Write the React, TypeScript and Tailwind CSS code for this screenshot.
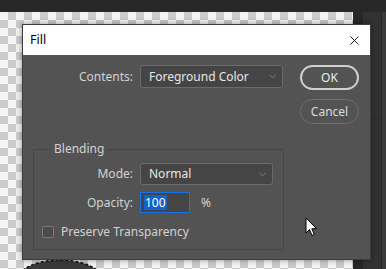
import { ChevronDown, X } from 'lucide-react';

const font = { fontFamily: '"Noto Sans", "Open Sans", sans-serif' };

function Select({ value, width }: { value: string; width: string }) {
  return (
    <div
      className={`${width} h-full flex items-center justify-between pl-[8px] pr-[4px] bg-[#454545] border border-[#6a6a6a] rounded-[3px] text-[12px] text-[#e6e6e6]`}
    >
      <span>{value}</span>
      <ChevronDown size={11} strokeWidth={1.5} className="text-[#9a9a9a]" />
    </div>
  );
}

export default function App() {
  return (
    <div className="relative w-[386px] h-[269px] overflow-hidden bg-[#282828]" style={font}>
      {/* workspace */}
      <div className="flex flex-col h-full">
        <div className="h-[12px] shrink-0" />
        <div className="flex flex-1">
          <div className="relative w-[353px] bg-[conic-gradient(#cbcbcb_25%,#f4f4f4_0_50%,#cbcbcb_0_75%,#f4f4f4_0)] bg-[length:16px_16px] overflow-hidden">
            {/* layer thumbnail peeking under dialog */}
            <svg className="absolute left-[14px] top-[244px]" width="92" height="30" viewBox="0 0 92 30">
              <ellipse cx="46" cy="26" rx="44" ry="22" fill="#3a3a3a" />
              <ellipse cx="46" cy="26" rx="44" ry="22" fill="none" stroke="#111" strokeWidth="1.5" strokeDasharray="3 2" />
            </svg>
          </div>
          <div className="w-[10px]" />
          <div className="flex-1 flex bg-[#323232]">
            <div className="w-[18px] flex flex-col">
              <div className="h-[106px]" />
              <div className="h-px bg-[#2a2a2a]" />
              <div className="flex-1" />
            </div>
            <div className="w-px bg-[#262626]" />
            <div className="flex-1 bg-[#3a3a3a]" />
          </div>
        </div>
      </div>

      {/* Fill dialog */}
      <div className="absolute left-[22px] top-[24px] w-[349px] h-[236px] flex flex-col bg-[#535353] border border-[#3c3c3c] shadow-[0_0_6px_rgba(0,0,0,0.4)]">
        <div className="h-[30px] shrink-0 bg-white flex items-center justify-between pl-[7px] pr-[8px]">
          <span className="text-[12.5px] text-black" style={{ fontFamily: '"Noto Sans", sans-serif' }}>
            Fill
          </span>
          <X size={15} strokeWidth={1.4} className="text-black" />
        </div>

        <div className="flex pl-[10px] pt-[10px]">
          <div className="w-[251px] flex flex-col">
            <div className="flex items-center h-[23px] gap-[7px]">
              <span className="w-[100px] text-right text-[12px] text-[#d2d2d2]">Contents:</span>
              <Select value="Foreground Color" width="w-[143px]" />
            </div>

            <div className="relative mt-[61px] h-[101px] border border-[#464646] flex flex-col">
              <span className="absolute -top-[10px] left-[17px] px-[3px] bg-[#535353] text-[12px] text-[#d2d2d2]">
                Blending
              </span>
              <div className="flex items-center h-[22px] gap-[7px] mt-[13px]">
                <span className="w-[99px] text-right text-[12px] text-[#d2d2d2]">Mode:</span>
                <Select value="Normal" width="w-[133px]" />
              </div>
              <div className="flex items-center h-[21px] gap-[7px] mt-[7px]">
                <span className="w-[99px] text-right text-[12px] text-[#d2d2d2]">Opacity:</span>
                <div className="w-[50px] h-full flex items-center pl-[3px] bg-[#454545] border border-[#1473e6]">
                  <span className="bg-[#1463c8] text-white text-[12px] leading-[15px] px-px">100</span>
                </div>
                <span className="ml-[4px] text-[12px] text-[#d2d2d2]">%</span>
              </div>
              <div className="flex items-center gap-[7px] mt-[10px] ml-[8px]">
                <div className="w-[12px] h-[12px] rounded-[2px] border border-[#7a7a7a] bg-[#4a4a4a]" />
                <span className="text-[12px] text-[#d2d2d2]">Preserve Transparency</span>
              </div>
            </div>
          </div>

          <div className="ml-[16px] flex flex-col gap-[9px]">
            <button className="w-[59px] h-[25px] rounded-full border-2 border-[#cfcfcf] text-[12px] text-[#ececec]">
              OK
            </button>
            <button className="w-[59px] h-[25px] rounded-full border border-[#6e6e6e] text-[12px] text-[#dcdcdc]">
              Cancel
            </button>
          </div>
        </div>

        {/* mouse cursor */}
        <svg className="absolute left-[282px] top-[192px]" width="14" height="21" viewBox="0 0 14 21">
          <path d="M1 1 L1 16 L4.5 12.5 L7 18.5 L9.3 17.5 L6.8 11.7 L11.5 11.7 Z" fill="#fff" stroke="#000" strokeWidth="1" strokeLinejoin="round" />
        </svg>
      </div>
    </div>
  );
}
